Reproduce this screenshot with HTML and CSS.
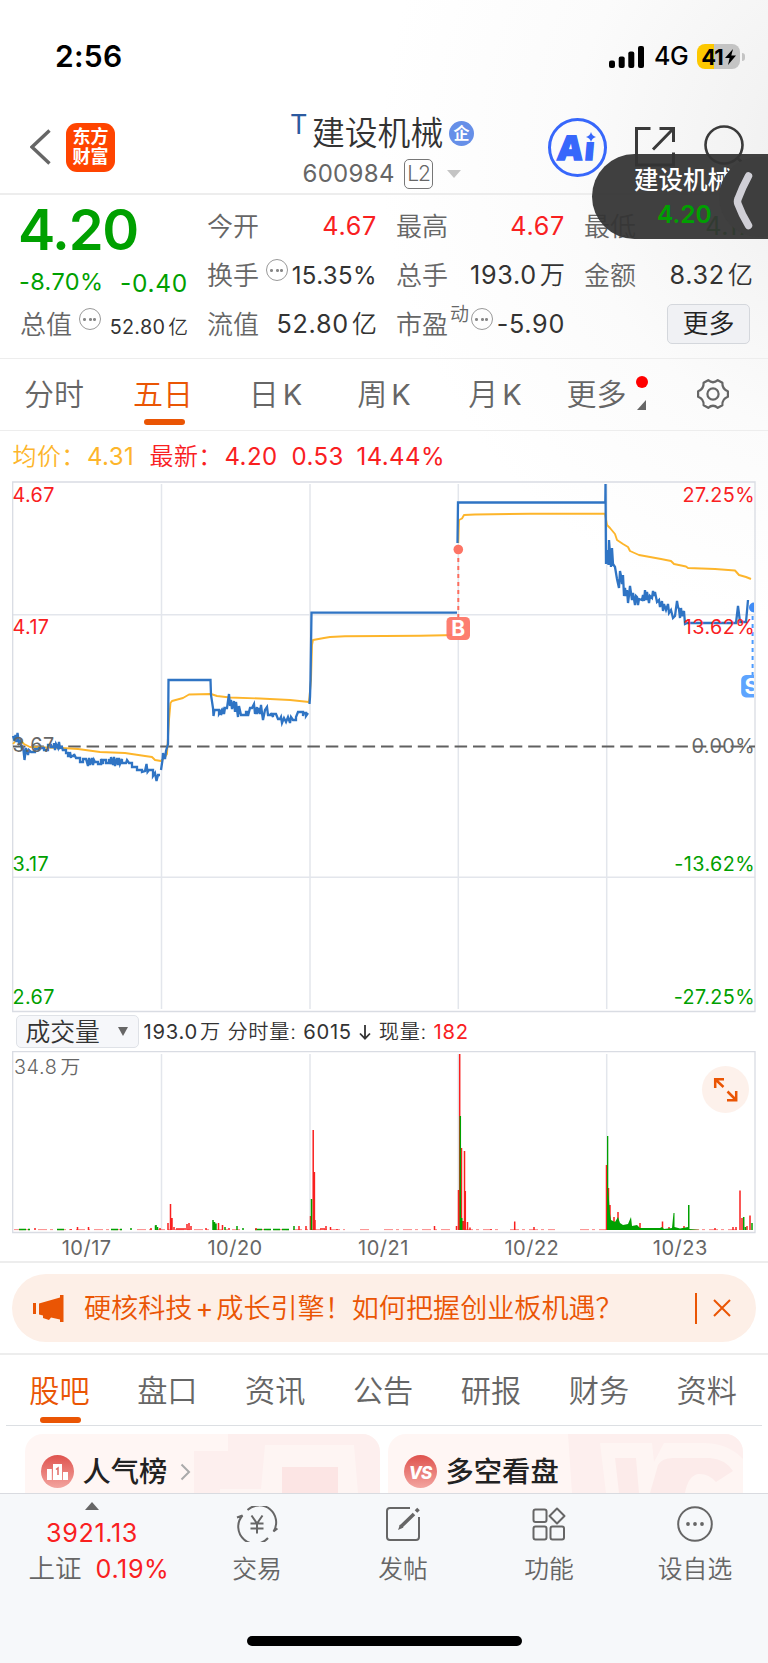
FILE: index.html
```html
<!DOCTYPE html>
<html lang="zh-CN">
<head>
<meta charset="utf-8">
<title>建设机械 600984</title>
<link rel="stylesheet" href="styles.css">
</head>
<body>
<div class="app">
  <div class="status">
    <span class="clock">2:56</span>
    <div class="status-right">
      <svg class="signal" width="36" height="22" viewBox="0 0 36 22"><rect x="0" y="14.5" width="6" height="7.5" rx="2"/><rect x="9.7" y="10.5" width="6" height="11.5" rx="2"/><rect x="19.3" y="5.5" width="6" height="16.5" rx="2"/><rect x="29" y="0" width="6" height="22" rx="2"/></svg>
      <span class="net">4G</span>
      <span class="battery">41<svg width="11" height="16" viewBox="0 0 11 16"><path d="M8 0 0 9h4.6L3 16l8-9.4H6.300z"/></svg></span>
      <span class="battery-tip"></span>
    </div>
  </div>

  <header class="header">
    <div class="header-left">
      <svg width="21" height="36" viewBox="0 0 21 36" fill="none" stroke="#666" stroke-width="3.400"><path d="M19.500 1.500 2 18l17.500 16.500"/></svg>
      <div class="logo"><span>东方</span><span>财富</span></div>
    </div>
    <div class="title">
      <div class="name-row"><span class="mark">T</span><span class="name">建设机械</span><span class="badge">企</span></div>
      <div class="code-row"><span>600984</span><span class="l2">L2</span><span class="caret"></span></div>
    </div>
    <div class="header-right">
      <div class="ai"><span class="ai-text">A<span>ı</span></span><svg class="spark" width="10" height="10" viewBox="0 0 10 10"><path d="M5 0Q6 4 10 5 6 6 5 10 4 6 0 5 4 4 5 0"/></svg></div>
      <svg class="share" width="42" height="42" viewBox="0 0 42 42" fill="none" stroke="#3a3a3a" stroke-width="3"><path d="M16.500 2.500H2.500V39H39.500V26.500M25.500 2.500H39.500V16M39 3 19 23.500"/></svg>
      <svg class="search" width="42" height="42" viewBox="0 0 42 42" fill="none" stroke="#3a3a3a" stroke-width="2.600"><circle cx="20" cy="20" r="18.500"/><path d="m33.500 33 7 7"/></svg>
    </div>
  </header>

  <section class="quote">
    <div class="q-main">
      <div class="price">4.20</div>
      <div class="change"><span class="pct">-8.70%</span><span>-0.40</span></div>
      <div class="cell mv"><label>总值</label><i class="dots"></i><span class="small">52.80<b>亿</b></span></div>
    </div>
    <div class="q-col">
      <div class="cell"><label>今开</label><span class="up">4.67</span></div>
      <div class="cell"><label>换手</label><i class="dots"></i><span class="turn">15.35%</span></div>
      <div class="cell"><label>流值</label><span>52.80<b>亿</b></span></div>
    </div>
    <div class="q-col">
      <div class="cell"><label>最高</label><span class="up">4.67</span></div>
      <div class="cell"><label>总手</label><span>193.0<b>万</b></span></div>
      <div class="cell pe"><label>市盈<sup>动</sup></label><i class="dots"></i><span>-5.90</span></div>
    </div>
    <div class="q-col last">
      <div class="cell"><label>最低</label><span class="low">4.17</span></div>
      <div class="cell"><label>金额</label><span>8.32<b>亿</b></span></div>
      <div class="cell end"><button class="more">更多</button></div>
    </div>
  </section>

  <nav class="periods">
    <span>分时</span><span class="on">五日</span><span>日<em>K</em></span><span>周<em>K</em></span><span>月<em>K</em></span><span class="p-more">更多<i></i><svg width="9" height="10" viewBox="0 0 9 10"><path d="M9 0V10H0z" fill="#666"/></svg></span>
    <span class="gear"><svg width="34" height="34" viewBox="0 0 34 34" fill="none" stroke="#666" stroke-width="2.200" stroke-linejoin="round"><path d="M12.200 3.200Q17 7.300 21.800 3.200L26.400 5.800Q26 12 31.900 14.200V19.800Q26 22 26.400 28.200L21.800 30.800Q17 26.700 12.200 30.800L7.600 28.200Q8 22 2.100 19.800V14.200Q8 12 7.600 5.800Z"/><circle cx="17" cy="17" r="5.600"/></svg></span>
  </nav>

  <div class="legend"><span class="avg">均价：</span><span class="avg num">4.31</span><span>最新：</span><span class="num">4.20</span><span class="num">0.53</span><span class="num">14.44%</span></div>

  <svg class="chart" width="768" height="532" viewBox="0 481 768 532">
    <g class="grid"><path d="M161.500 484V1009M310 484V1009M458.300 484V1009M606.700 484V1009M12 614.800H755M12 877.300H755"/></g>
    <path class="frame" d="M12.700 482V1011.500H755V482Z"/>
    <path class="zero" d="M13 746.500H755"/>
    <path class="avgline" d="M13 744 18 738 24 744 30 747 62 748 78 749 100 752 125 753 145 756 152 757 155 760 161 761 165 757 167 754 169 720 170.500 703 172 701 183 698 189 694.500 211 694 217 696 230 697.500 260 698.500 290 700 309 702 311 680 312 645 313 640 324 638 330 637 345 636.300 384 636 420 635.700 457 635M458.300 543 459 520 462 518.500 464 515 475 514.500 530 513.700 605 513.700 607 525 610 528 615 534 617 540 623 544 628 547 630 551 639 555 650 557 661 559 671 561 674 564 686 566.500 688 568 715 569 735 570.500 739 575 746 577 751 579"/>
    <path class="price-line" d="M13 736 14.500 741 15.500 735 16.500 742 17.500 733 19 743 20.500 741 22 750 23 746 24.500 760 26 748 28 755 29 750 31 752H35V749H39V748H44V750H48V745H51V747H54V743L55 750 56 744 58 748 59 742 60 748 62 747 63 751V750H66V753H68V756H70V752L71 758V756H74V754L76 758H80V762H83V759H86L88 766 89 758 90 765 92 758 93 765 94 760 95 762H98V764H101V759L103 764V760H106V763H109V759L111 764V757L113 765 114 757 115 766 117 758 118 765 119 758 120 764 122 759V763H126L127 760 129 763H132V767H137V770H142V772L145 771 146.500 764 147.500 772 149 770H153V776L155 773 156.500 781 158 775H160M161 770 162.500 760 163 753 165 759 166 751 168 744 168.500 680H210.500L211 695 213 708 213.500 716 214.500 710H219V714L221 711V715L223 710 224 714 225 708H227L229 694 230 706 231 700 232 709 234 701 235 712 236 702 238 717 239 706 241 715H246V712H248V716L250 708H252L254 704 255 714 257 707V714L259 708 260 714 261 705 262 713 263 720 265 710 267 707 268 715H271V713L273 717V714H276L278 719H280L281 717 282 723 284 718 286 722 288 717 290 723 291 717 293 720H296V717L298 712H303V716L304 713H306V716L308 713M309.500 704 310 697 310.500 680 311.500 612.700H457M457.500 543 458 502.500H605.300L605.500 484 606 564 607 550 608.500 565 609 540 611 567 612 548 613 564 615 567 617 579 619 588 620 571 621 576 622 584 623 575 624 596 625 588 626 596 627 590 628 603 629 595 630 586 632 600 633 593 635 605 636 596 637 597 638 605 639 599 642 600 643 595 644 601 645 590 646 600 647 592 649 603 650 596 652 598 653 591 654 596 655 592 657 602 659 600 660 607 662 601 663 611 664 604 666 610 668 604 669 613 671 610 673 618 675 616 677 601 678 607 679 609 680 618 681 608 682 616 684 611 685 624 687 623H736L738 606 740 622H746L748 600"/>
    <path d="M458.300 550V617" stroke="#fd6d5e" stroke-width="2" stroke-dasharray="4 4" fill="none"/>
    <circle cx="458.300" cy="549.500" r="4.800" fill="#fd7465"/>
    <rect x="446.500" y="617" width="23.500" height="23" rx="4.500" fill="#fd7465" fill-opacity=".93"/>
    <text x="458.300" y="636" class="flag" text-anchor="middle">B</text>
    <path d="M752.600 608V684" stroke="#4c9bff" stroke-width="2" stroke-dasharray="4 4" fill="none"/>
    <path d="M754 602.500A5 5 0 0 0 754 612.500Z" fill="#408cf6"/>
    <path d="M754 675H746A5 5 0 0 0 741.200 680V692.500A5 5 0 0 0 746 697.500H754Z" fill="#5ea4ff"/>
    <svg x="740" y="670" width="14" height="32"><text x="4.500" y="24" class="flag">S</text></svg>
    <g class="axis">
      <text x="12.500" y="501.500" class="t-up">4.67</text><text x="12.500" y="634" class="t-up">4.17</text><text x="12.500" y="752">3.67</text><text x="12.500" y="871" class="t-down">3.17</text><text x="12.500" y="1003.500" class="t-down">2.67</text>
      <g text-anchor="end"><text x="755" y="501.500" class="t-up">27.25%</text><text x="755" y="634" class="t-up">13.62%</text><text x="755" y="753">0.00%</text><text x="755" y="871" class="t-down">-13.62%</text><text x="755" y="1003.500" class="t-down">-27.25%</text></g>
    </g>
  </svg>

  <div class="vol-bar"><button class="vol-select">成交量<svg width="10" height="9" viewBox="0 0 10 9"><path d="M0 0H10L5 9z" fill="#666"/></svg></button><span class="vol-text"><span class="num">193.0</span><b>万</b> 分时量: <span class="num">6015</span> <svg width="12" height="16" viewBox="0 0 12 16" fill="none" stroke="#333" stroke-width="1.800"><path d="M6 1V14.500M1 9.500 6 14.700 11 9.500"/></svg> 现量: <span class="up num">182</span></span></div>

  <div class="vol-wrap">
    <svg width="768" height="183" viewBox="0 1051 768 183">
      <g class="grid"><path d="M161.500 1054V1230M310 1054V1230M458.300 1054V1230M606.700 1054V1230"/></g>
      <path class="frame" d="M12.700 1051.700V1232.500H755V1051.700Z"/>
      <path class="bars r faint" d="M14 1229.600H32M38 1229.600H90M94 1229.600H123M137 1229.600H240M255 1229.600H345M360 1229.600H372M384 1229.600H450M464 1229.600H500M510 1229.600H555M580 1229.600H606M690 1229.600H740" stroke-dasharray="9 3 3 4"/>
      <path class="bars g" d="M19 1229.500H30M57 1229.500H65M111 1229.500H122M131 1228V1230M156 1225V1230M255 1229.500H290" stroke-dasharray="7 2"/>
      <path class="bars r" d="M35 1228V1230M71 1229V1230M77.500 1227V1230M88.500 1227V1230M151 1228V1230M160 1228V1230M168 1223V1230M170.500 1204V1230M172 1218V1230M174 1227V1230M176 1229H186M187 1224V1230M189 1223V1230M191 1226V1230M206 1228V1230"/>
      <path class="bars g" d="M155.500 1225.500V1230M157.500 1227V1230M213 1220V1230M214.500 1222V1230M216 1223.500V1230M225 1227V1230M237 1226V1230M243 1228V1230M294 1226V1230"/>
      <path class="bars r" d="M218.500 1223V1230M222.500 1225V1230M229 1228V1230M256 1228V1230M299 1226V1230M306 1226V1230M310.500 1216V1230M313.200 1130V1230M314.400 1172V1230M315 1220V1230M320 1229H325M326 1226V1230M330.500 1227V1230M337 1229V1230"/>
      <path class="bars g" d="M311.500 1199V1230"/>
      <path class="bars r" d="M434.500 1226V1230M456.500 1226V1230M458.500 1190V1230M459.700 1054V1230M461.500 1148V1230M464.500 1151V1230M465.300 1191V1230M463 1221V1230M467.500 1222V1230M470 1227.500V1230M491 1229V1230M514.700 1221.500V1230M534 1227V1230"/>
      <path class="bars g" d="M460.300 1116V1230M461.700 1218V1230"/>
      <path class="bars r" d="M606.500 1165V1230M608.500 1188V1230M610 1205V1230M614 1217V1230M618 1212V1230M640 1223V1230M662.500 1221.500V1230M669 1227V1230M684 1226V1230M715 1228V1230M733 1227V1230M740 1190.500V1230M742 1218V1230M750 1215.500V1230M736 1227V1230M747 1226V1230"/>
      <path class="greenfill" d="M607 1230V1136H608.300V1190L610 1214 611 1220 615 1222 618 1217 620 1223 623 1225 628 1224 631 1217 632 1226 637 1225 640 1228H660L662 1227 664 1229 672 1228 673.500 1213H674.500V1227L680 1228.500 688 1227V1205H689.500V1229L700 1230Z"/>
      <path class="bars g" d="M743.700 1217V1230M745.500 1227V1230M752 1223V1230"/>
      <text x="14" y="1073.500" class="vol-max">34.8<tspan dx="3">万</tspan></text>
      <circle cx="725.500" cy="1089.500" r="23.500" fill="#fdf1eb"/>
      <path d="M715.200 1088V1079.200H724M716 1080 723.500 1087M727.500 1091.500 735.500 1099.500M736.200 1091V1100.200H727" fill="none" stroke="#ea5504" stroke-width="2.500"/>
    </svg>
    <div class="dates"><span>10/17</span><span>10/20</span><span>10/21</span><span>10/22</span><span>10/23</span></div>
  </div>

  <div class="banner-wrap"><div class="banner">
    <svg width="31" height="27" viewBox="0 0 31 27" fill="#ea5504"><path d="M0 8H3V19H0zM6 8.500 27 2.500V0H30.500V27H27V24.500L18 22.500 16 25 10 23V20.500L6 19.500Z"/></svg>
    <span class="banner-text">硬核科技<em>+</em>成长引擎！如何把握创业板机遇？</span>
    <span class="bar"></span>
    <svg width="18" height="18" viewBox="0 0 18 18" fill="none" stroke="#ea5504" stroke-width="2"><path d="M1 1 17 17M17 1 1 17"/></svg>
  </div></div>

  <nav class="sections"><span class="on">股吧</span><span>盘口</span><span>资讯</span><span>公告</span><span>研报</span><span>财务</span><span>资料</span></nav>

  <div class="cards">
    <div class="card">
      <svg class="deco" width="355" height="59" viewBox="0 0 355 59"><path d="M169 59V17H203V0H355V59z" fill="#fdefee"/><path d="M195 59V55H236L240 11H329L333 59z" fill="#fef5f3"/><path d="M257 33H313V59H257z" fill="#fce5e4"/></svg>
      <svg width="33" height="33" viewBox="0 0 33 33"><defs><linearGradient id="rg" x2="0" y2="1"><stop stop-color="#df534e"/><stop offset="1" stop-color="#f3a49f"/></linearGradient></defs><circle cx="16.500" cy="16.500" r="16.500" fill="url(#rg)"/><path d="M6 14H10.800V25H6zM12 9H21V25H12zM22 17H27V25H22z" fill="#fff"/><path d="M15 14.500 17 13V20" stroke="#df6a65" stroke-width="1.500" fill="none"/></svg>
      <span>人气榜</span>
      <svg class="go" width="11" height="18" viewBox="0 0 11 18" fill="none" stroke="#aaa" stroke-width="2"><path d="m1.500 1.500 7.500 7.500-7.500 7.500"/></svg>
    </div>
    <div class="card">
      <svg class="deco" width="355" height="59" viewBox="0 0 355 59"><path d="M184 59 180 0H355V59z" fill="#fdefee"/><path d="M218 59 212 9H264L266 28 276 9H315Q340 9 355 25V59H294z" fill="#fef5f3"/><path d="M231 59 227 24H248L251 59zM262 59 270 31Q274 24 285 24H322Q337 25 345 37L328 48Q320 39 310 40 300 42 297 59z" fill="#fcebea"/></svg>
      <svg width="33" height="33" viewBox="0 0 33 33"><circle cx="16.500" cy="16.500" r="16.500" fill="url(#rg)"/><text x="16" y="23.500" text-anchor="middle" class="vs">VS</text></svg>
      <span>多空看盘</span>
    </div>
  </div>

  <footer class="tabbar">
    <div class="items">
      <div class="index"><svg width="14" height="8" viewBox="0 0 14 8"><path d="M7 0 14 8H0z" fill="#666"/></svg><span class="idx">3921.13</span><span class="idx2"><label>上证</label>0.19%</span></div>
      <div class="item"><svg width="42" height="36" viewBox="0 0 42 36" fill="none" stroke="#666" stroke-width="2"><path d="M11.500 4A17 17 0 0 1 37.500 25.500L41.500 22.500M1 11.500 6.500 9.500A17 17 0 0 0 32 32M15.500 9.500 21 17.500 26.500 9.500M21 17.500V27.500M14.500 17.500H27.500M14.500 22.500H27.500"/></svg><span>交易</span></div>
      <div class="item"><svg width="36" height="36" viewBox="0 0 36 36" fill="none" stroke="#666" stroke-width="2"><path d="M25 2H5Q2 2 2 5V31Q2 34 5 34H31Q34 34 34 31V11"/><path d="M15.500 21 29 8M31 5.500 33.500 3" stroke-width="3.600"/><path d="M13 24 15 18.500 18.500 21.500z" fill="#666" stroke="none"/></svg><span>发帖</span></div>
      <div class="item"><svg width="34" height="36" viewBox="0 0 34 36" fill="none" stroke="#666" stroke-width="2"><rect x="1.500" y="3.500" width="13" height="12.500" rx="2"/><rect x="1.500" y="20.500" width="13" height="13" rx="2"/><rect x="18.500" y="20.500" width="13.500" height="13" rx="2"/><path d="M25 2.500 32.500 10 25 17.500 17.500 10z" stroke-linejoin="round"/></svg><span>功能</span></div>
      <div class="item"><svg width="36" height="36" viewBox="0 0 36 36" fill="none" stroke="#666" stroke-width="2"><circle cx="18" cy="18" r="16.800"/><g fill="#666" stroke="none"><circle cx="11" cy="18" r="1.900"/><circle cx="18" cy="18" r="1.900"/><circle cx="25" cy="18" r="1.900"/></g></svg><span>设自选</span></div>
    </div>
    <div class="home"></div>
  </footer>

  <div class="floating">
    <div class="float-name">建设机械</div><div class="float-price">4.20</div>
    <svg width="20" height="58" viewBox="0 0 20 58" fill="none" stroke="#d0cfd6" stroke-width="7.500" stroke-linecap="round" stroke-linejoin="round"><path d="M15.500 4Q9 16 5 27 4 29.500 5 32 9 43 15.500 53.500"/></svg>
  </div>
</div>
</body>
</html>
```
FILE: styles.css
```css
* { box-sizing: border-box; }
body { margin: 0; font-family: Inter, "Noto Sans CJK SC", sans-serif; font-weight: 350; color: #333; }
.app { position: relative; width: 768px; height: 1663px; overflow: hidden; display: flex; flex-direction: column; background: radial-gradient(circle at 860px 150px, #ececec 0, #f3f3f3 120px, #fbfbfb 290px, #fff 480px); }
.app > * { flex: none; }
svg { display: block; flex: none; }
b, em { font-style: normal; font-weight: 350; }
button { font-family: inherit; font-weight: inherit; padding: 0; margin: 0; }
.up { color: #f9201f; }
.num { font-weight: 400; }

.status { height: 108px; padding: 44px 23px 0 55px; display: flex; justify-content: space-between; color: #000; }
.clock { font-size: 30px; font-weight: 600; line-height: 25px; letter-spacing: .3px; }
.status-right { display: flex; height: 25px; align-items: center; }
.net { font-size: 25px; font-weight: 500; line-height: 25px; letter-spacing: -.5px; margin-left: 9px; width: 43px; }
.battery { width: 43px; height: 25px; border-radius: 8px; background: linear-gradient(90deg, #fdc800 17px, #c4c4c4 17px); display: flex; align-items: center; justify-content: center; gap: 2px; font-size: 22px; font-weight: 700; letter-spacing: -1px; }
.battery-tip { width: 3px; height: 8px; margin-left: 2px; border-radius: 0 4px 4px 0; background: #c4c4c4; }

.header { height: 87px; border-bottom: 2px solid #ededed; display: grid; grid-template-columns: 291px 257px 1fr; }
.header-left { display: flex; align-items: center; gap: 15px; padding: 0 0 7px 30px; }
.logo { width: 49px; height: 49px; border-radius: 11px; background: #ff4400; color: #fff; font-size: 18px; font-weight: 700; line-height: 20px; display: flex; flex-direction: column; align-items: center; justify-content: center; }
.name-row { display: flex; height: 50px; }
.mark { width: 22px; font-size: 27px; line-height: 33px; font-weight: 400; color: #2c5aa0; margin-left: -1px; }
.name { font-size: 32.800px; line-height: 51px; width: 132px; }
.badge { width: 25px; height: 25px; margin: 13px 0 0 5px; border-radius: 50%; background: #668fe8; color: #fff; font-size: 16px; font-weight: 700; line-height: 25px; text-align: center; }
.code-row { display: flex; align-items: center; padding-left: 11.500px; height: 31px; color: #666; font-size: 24px; }
.code-row > :first-child { width: 101.500px; font-weight: 400; letter-spacing: .3px; }
.l2 { width: 29px; height: 30px; border: 1.500px solid #777; border-radius: 5px; font-size: 21px; line-height: 28px; text-align: center; letter-spacing: -1px; }
.caret { margin-left: 14px; border: 7px solid transparent; border-top: 8px solid #c4c4c4; border-bottom: 0; }
.header-right { display: flex; padding-top: 10px; }
.ai { position: relative; width: 59px; height: 59px; border: 3px solid #3767fb; border-radius: 50%; color: #3767fb; }
.ai-text { display: block; font-family: "Open Sans", sans-serif; font-size: 34px; font-weight: 800; line-height: 53px; padding-left: 7px; -webkit-text-stroke: 1.500px #3767fb; transform: skewX(-5deg); }
.ai-text span { margin-left: 2px; font-size: 31px; }
.spark { position: absolute; left: 35px; top: 11px; fill: #3767fb; }
.share { margin: 8px 0 0 27px; }
.search { margin: 7px 0 0 28px; }

.quote { height: 164px; border-bottom: 1px solid #ededed; display: grid; grid-template-columns: 167px 169px 168px 168px; column-gap: 20px; padding: 7px 0 0 20px; }
.q-main { display: grid; grid-template-rows: 57.500px 40.500px 49px; }
.price { font-size: 56px; line-height: 57px; font-weight: 600; color: #00a000; letter-spacing: -1.300px; margin-left: -2px; }
.change { display: flex; justify-content: space-between; color: #00a000; font-size: 24.500px; font-weight: 400; line-height: 46px; letter-spacing: .7px; margin: 0 -1px; }
.change .pct { font-size: 23.500px; line-height: 43px; letter-spacing: .4px; }
.q-col { display: grid; grid-template-rows: repeat(3, 49px); }
.cell { display: flex; height: 49px; justify-content: space-between; align-items: center; font-size: 25.200px; line-height: 49px; white-space: nowrap; letter-spacing: .7px; }
.cell > span { font-weight: 400; margin-right: -1px; }
.cell label { font-size: 26px; color: #666; letter-spacing: 0; }
.cell b { margin-left: 3px; letter-spacing: 0; }
.cell sup { font-size: 19px; line-height: 20px; position: relative; top: -3px; margin-left: 2px; }
.dots { width: 22px; height: 22px; border: 1.800px solid #999; border-radius: 50%; margin: -11px auto 0 7px; background: radial-gradient(circle, #888 1.200px, transparent 1.800px) center / 5px 5px no-repeat, radial-gradient(circle, #888 1.200px, transparent 1.800px) 2px center / 5px 5px no-repeat, radial-gradient(circle, #888 1.200px, transparent 1.800px) 12px center / 5px 5px no-repeat; flex: none; }
.pe .dots { margin-left: 2px; }
.cell .small { font-size: 19.800px; padding-top: 6px; letter-spacing: .3px; }
.cell .turn { font-size: 24px; letter-spacing: .4px; }
.low { color: #00a000; }
.more { width: 83px; height: 40px; border: 1.500px solid #d4d7dc; border-radius: 5px; background: #f0f1f4; font-size: 26px; line-height: 36px; color: #222; margin: -1px 2px 0 0; }
.end { justify-content: flex-end; letter-spacing: 0; }

.periods { height: 72px; border-bottom: 1px solid #ededed; display: grid; grid-template-columns: 108px 110px 115px 102px 120px 83px 1fr; color: #666; font-size: 30px; line-height: 71px; text-align: center; white-space: nowrap; }
.periods em { margin-left: 4px; font-size: 29px; font-weight: 400; }
.on { position: relative; color: #ea5504; }
.periods .on::after, .sections .on::after { content: ""; position: absolute; left: 50%; margin-left: -19.500px; bottom: 5px; width: 41px; height: 6.500px; border-radius: 4px; background: #ea5504; }
.p-more { position: relative; }
.p-more i { position: absolute; left: 80.500px; top: 17px; width: 12px; height: 12px; border-radius: 50%; background: #f00; }
.p-more svg { position: absolute; left: 82px; top: 41px; }
.gear { padding: 18px 0 0 58px; }

.legend { height: 50px; padding-left: 12.500px; display: grid; grid-template-columns: 74.500px 62.500px 75px 67px 65px 120px; font-size: 24px; line-height: 51px; color: #f9201f; white-space: nowrap; letter-spacing: .4px; }
.legend .avg { color: #fdb52b; }

.grid path { stroke: #e3e6ec; stroke-width: 1.500; fill: none; }
.frame { fill: none; stroke: #d9dce3; stroke-width: 1.300; }
.zero { stroke: #606060; stroke-width: 2.200; stroke-dasharray: 12.500 5.900; fill: none; }
.avgline { fill: none; stroke: #fdb52b; stroke-width: 1.900; stroke-linejoin: round; }
.price-line { fill: none; stroke: #2f74c4; stroke-width: 2.300; }
.flag { font-size: 21px; font-weight: 700; fill: #fff; }
.axis { font-size: 19.800px; font-weight: 400; fill: #666; letter-spacing: .4px; }
.t-up { fill: #f9201f; }
.t-down { fill: #00a000; }

.vol-bar { height: 38px; display: flex; align-items: center; padding: 0 0 1px 16px; gap: 4.500px; }
.vol-select { width: 123px; height: 33px; border: 1.500px solid #dfe2e7; border-radius: 5px; background: #f6f7fa; display: flex; align-items: center; gap: 18px; padding-left: 8.500px; font-size: 24.800px; line-height: 30px; color: #333; }
.vol-text { font-size: 20.200px; line-height: 38px; height: 37px; white-space: pre; letter-spacing: .75px; }
.vol-text svg { display: inline-block; vertical-align: -1px; margin: 0 1px; }
.vol-text b { margin-left: 2px; }
.vol-max { font-size: 19.800px; fill: #666; letter-spacing: .6px; }
.vol-wrap { height: 212px; border-bottom: 2px solid #ededed; }
.bars { fill: none; stroke-width: 1.500; }
.faint { stroke-width: .7; opacity: .75; }
.r { stroke: #f9201f; }
.g { stroke: #00a000; }
.greenfill { fill: #00a000; }
.dates { display: grid; grid-template-columns: repeat(5, 148.400px); padding-left: 12.500px; font-size: 20px; font-weight: 400; line-height: 28px; color: #666; text-align: center; letter-spacing: .5px; }

.banner-wrap { height: 92px; padding: 11px 12px; border-bottom: 2px solid #ededed; }
.banner { height: 68px; border-radius: 34px; background: #fdefe7; display: flex; align-items: center; padding-left: 21px; color: #ea5504; }
.banner-text { margin-left: 20px; width: 606px; font-size: 27.100px; line-height: 70px; height: 68px; white-space: nowrap; }
.banner-text em { margin: 0 3px; font-weight: 400; }
.bar { width: 2px; height: 31px; background: #ea5504; margin: 0 16px 0 5px; }

.sections { height: 71px; margin: 0 6px; border-bottom: 1px solid #dcdfe3; display: grid; grid-template-columns: repeat(7, 107.900px); font-size: 30.200px; line-height: 72px; color: #666; text-align: center; margin-left: 5.500px; }
.sections .on::after { bottom: 4px; }
.cards { height: 67px; padding: 8px 25px 0; display: grid; grid-template-columns: 355px 355px; gap: 8px; overflow: hidden; }
.card { position: relative; height: 100px; border-radius: 18px; overflow: hidden; background: #fff6f4; display: flex; align-items: flex-start; padding: 21px 0 0 16px; font-size: 28.300px; line-height: 35px; font-weight: 500; color: #222; gap: 8.500px; }
.card > * { position: relative; }
.card .deco { position: absolute; left: 0; top: 0; }
.card .go { margin: 8px 0 0 4px; }
.vs { font-size: 17px; font-weight: 800; font-style: italic; fill: #fff; letter-spacing: -1px; }

.tabbar { height: 171px; border-top: 1.500px solid #d9dbe0; background: #f6f8fa; }
.items { display: grid; grid-template-columns: 184px repeat(4, 146px); height: 142px; color: #666; }
.index { display: flex; flex-direction: column; align-items: center; padding-top: 8px; color: #f9201f; font-size: 25.200px; font-weight: 400; }
.idx { line-height: 36px; margin-top: 5px; letter-spacing: .6px; }
.idx2 { line-height: 35px; margin: 0 0 0 14px; letter-spacing: .6px; white-space: nowrap; }
.idx2 label { color: #666; font-size: 26.500px; font-weight: 350; margin-right: 14px; letter-spacing: 0; }
.item { display: flex; flex-direction: column; align-items: center; padding-top: 12px; font-size: 24.800px; }
.item span { line-height: 35px; margin-top: 10px; }
.home { width: 275px; height: 10px; margin: 0 auto; border-radius: 5px; background: #000; }

.floating { position: absolute; left: 592px; top: 154px; width: 230px; height: 85px; border-radius: 43px; background: rgba(52, 52, 52, .94); }
.float-name { margin: 11px 0 0 42px; color: #fff; font-size: 24.500px; line-height: 31px; font-weight: 500; white-space: nowrap; }
.float-price { margin: 3px 0 0 65px; color: #00a000; font-size: 24.500px; line-height: 31px; font-weight: 600; }
.floating::after { content: ""; position: absolute; left: 127px; top: 3px; width: 80px; height: 80px; border-radius: 50%; background: #3e3e3e; }
.floating svg { position: absolute; z-index: 1; left: 141px; top: 18px; }
```
